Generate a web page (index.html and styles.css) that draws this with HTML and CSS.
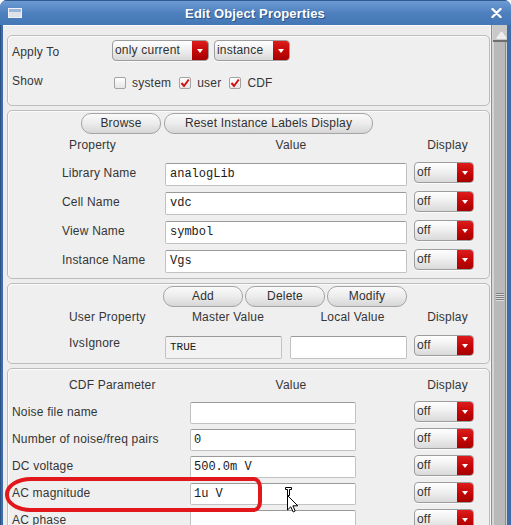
FILE: index.html
```html
<!DOCTYPE html>
<html>
<head>
<meta charset="utf-8">
<title>Edit Object Properties</title>
<link rel="stylesheet" href="styles.css">
</head>
<body>
<div class="window">
  <div class="titlebar">
    <span class="ticon"></span>
    <span class="title">Edit Object Properties</span>
    <svg class="close" width="11" height="10" viewBox="0 0 11 10"><path d="M1.5 1 L9.5 9 M9.5 1 L1.5 9" stroke="#fff" stroke-width="2.4" stroke-linecap="round"/></svg>
  </div>
  <div class="frame">
    <div class="content">
      <section class="group g1">
        <div class="r-apply">
          <span class="lbl lbl-apply">Apply To</span>
          <div class="combo c-only"><span class="ctext">only current</span><span class="carrow"></span></div>
          <div class="combo c-inst"><span class="ctext">instance</span><span class="carrow"></span></div>
        </div>
        <div class="r-show">
          <span class="lbl lbl-show">Show</span>
          <span class="cbitem"><span class="cb"></span><span>system</span></span>
          <span class="cbitem"><span class="cb"><svg width="10" height="10" viewBox="0 0 10 10"><path d="M1.5 5 L4 8 L8.8 1.5" fill="none" stroke="#d01010" stroke-width="2"/></svg></span><span>user</span></span>
          <span class="cbitem"><span class="cb"><svg width="10" height="10" viewBox="0 0 10 10"><path d="M1.5 5 L4 8 L8.8 1.5" fill="none" stroke="#d01010" stroke-width="2"/></svg></span><span>CDF</span></span>
        </div>
      </section>

      <section class="group g2">
        <div class="btnrow br2">
          <div class="btn b-browse">Browse</div>
          <div class="btn b-reset">Reset Instance Labels Display</div>
        </div>
        <div class="grid2">
          <span class="hdr h-prop">Property</span>
          <span class="hdr h-val">Value</span>
          <span class="hdr h-disp">Display</span>

          <span class="lbl l2">Library Name</span>
          <div class="field f2">analogLib</div>
          <div class="combo c-off"><span class="ctext">off</span><span class="carrow"></span></div>

          <span class="lbl l2">Cell Name</span>
          <div class="field f2">vdc</div>
          <div class="combo c-off"><span class="ctext">off</span><span class="carrow"></span></div>

          <span class="lbl l2">View Name</span>
          <div class="field f2">symbol</div>
          <div class="combo c-off"><span class="ctext">off</span><span class="carrow"></span></div>

          <span class="lbl l2">Instance Name</span>
          <div class="field f2">Vgs</div>
          <div class="combo c-off"><span class="ctext">off</span><span class="carrow"></span></div>
        </div>
      </section>

      <section class="group g3">
        <div class="btnrow br3">
          <div class="btn b-small">Add</div>
          <div class="btn b-small">Delete</div>
          <div class="btn b-small">Modify</div>
        </div>
        <div class="grid3">
          <span class="hdr h-prop">User Property</span>
          <span class="hdr h-master">Master Value</span>
          <span class="hdr h-local">Local Value</span>
          <span class="hdr h-disp">Display</span>

          <span class="lbl l3">IvsIgnore</span>
          <div class="field f3 ro">TRUE</div>
          <div class="field f3"></div>
          <div class="combo c-off"><span class="ctext">off</span><span class="carrow"></span></div>
        </div>
      </section>

      <section class="group g4">
        <div class="grid4h">
          <span class="hdr h-prop">CDF Parameter</span>
          <span class="hdr h-val">Value</span>
          <span class="hdr h-disp">Display</span>
        </div>
        <div class="grid4">
          <span class="lbl l4">Noise file name</span>
          <div class="field f4"></div>
          <div class="combo c-off"><span class="ctext">off</span><span class="carrow"></span></div>

          <span class="lbl l4">Number of noise/freq pairs</span>
          <div class="field f4">0</div>
          <div class="combo c-off"><span class="ctext">off</span><span class="carrow"></span></div>

          <span class="lbl l4">DC voltage</span>
          <div class="field f4">500.0m V</div>
          <div class="combo c-off"><span class="ctext">off</span><span class="carrow"></span></div>

          <span class="lbl l4">AC magnitude</span>
          <div class="field f4">1u V</div>
          <div class="combo c-off"><span class="ctext">off</span><span class="carrow"></span></div>

          <span class="lbl l4">AC phase</span>
          <div class="field f4"></div>
          <div class="combo c-off"><span class="ctext">off</span><span class="carrow"></span></div>
        </div>
      </section>
    </div>
    <div class="scrollbar">
      <div class="sb-up"><svg width="11" height="8" viewBox="0 0 11 8"><path d="M5.5 0.8 L10.2 7.2 L0.8 7.2 Z" fill="#ececec" stroke="#f8f8f8" stroke-width="1"/></svg></div>
      <div class="sb-thumb"><span class="grip"></span></div>
    </div>
  </div>
  <div class="annot"></div>
  <svg class="cursor" width="16" height="27" viewBox="0 0 16 27">
    <path d="M1.5 1.5 H7.5 V3.5 H5.5 V9.5 H3.5 V3.5 H1.5 Z" fill="#fff" stroke="#000" stroke-width="1"/>
    <path d="M3.5 9.5 L3.5 24 L6.8 20.8 L9.2 26 L11.2 25 L8.9 19.8 L13.8 19.8 Z" fill="#fff" stroke="#000" stroke-width="1" stroke-linejoin="round"/>
  </svg>
</div>
</body>
</html>
```

FILE: styles.css
```css
* { box-sizing: border-box; }
html, body { margin: 0; padding: 0; background: #ffffff; }
body {
  width: 511px; height: 525px; overflow: hidden;
  font-family: "Liberation Sans", Arial, sans-serif;
  font-size: 12px; letter-spacing: 0.2px; color: #353535;
}
.window {
  position: relative;
  width: 511px; height: 525px;
  display: flex; flex-direction: column;
  border-radius: 7px 7px 0 0; overflow: hidden;
  background: #3a67a2;
}
.titlebar {
  flex: none; height: 25px;
  display: grid; grid-template-columns: 1fr auto 1fr; align-items: center;
  padding: 0 9px 0 8px;
  background: linear-gradient(#6c9bd3, #4f80be 50%, #4477b6);
  border-top: 1px solid #2f5a92;
}
.ticon {
  justify-self: start;
  width: 14px; height: 10px;
  background: linear-gradient(#9db6d8 0 3px, #dde2ea 3px);
  border: 1px solid #eef2f7;
}
.title {
  font-weight: bold; font-size: 13px; letter-spacing: 0.15px;
  color: #ffffff; text-shadow: 1px 1px 0 #2d5589;
}
.close { justify-self: end; }
.frame {
  flex: 1; min-height: 0;
  display: flex;
  padding: 0 4px 0 3px;
  background: linear-gradient(to right, #2c5387 0 1px, #3d6ca9 1px);
}
.content {
  flex: 1; min-width: 0;
  background: #ededed;
  border-top: 1px solid #f9f9f9;
  padding: 9px 0 0 4px;
  display: flex; flex-direction: column; gap: 4px;
  overflow: hidden;
}
.group {
  flex: none;
  border: 1px solid #bcbcbc;
  border-radius: 5px;
  background: #efefef;
  box-shadow: inset 1px 1px 0 #fbfbfb;
}
.lbl { white-space: nowrap; }

/* group 1 */
.g1 { height: 71px; padding: 4px 0 0 4px; }
.r-apply { display: flex; align-items: center; height: 21px; }
.lbl-apply { width: 100px; padding-top: 3px; }
.r-show { display: flex; align-items: center; height: 20px; margin-top: 12px; }
.lbl-show { width: 102px; margin-top: -5px; }
.cbitem { display: flex; align-items: center; margin-right: 8px; }
.cb {
  width: 12px; height: 12px; margin-right: 6px;
  border: 1px solid #a3a3a3; border-radius: 2px;
  background: linear-gradient(#ffffff, #e6e6e6);
  display: flex; align-items: center; justify-content: center;
}
.cb svg { display: block; }

/* combos */
.combo {
  display: flex; height: 21px;
  border: 1px solid #9d9d9d; border-radius: 4px; overflow: hidden;
  background: linear-gradient(#ffffff, #f0f0f0 45%, #d9d9d9);
  box-shadow: 0 1px 0 #fafafa;
}
.ctext { flex: 1; padding-left: 2px; line-height: 19px; white-space: nowrap; overflow: hidden; color: #303030; }
.carrow {
  width: 16px; flex: none;
  background: linear-gradient(#de1d1d, #c30505 55%, #a60000);
  display: flex; align-items: center; justify-content: center;
}
.carrow::after {
  content: ""; width: 0; height: 0;
  border-left: 3.5px solid transparent; border-right: 3.5px solid transparent;
  border-top: 4px solid #ffffff;
}
.c-only { width: 97px; margin-right: 5px; }
.c-inst { width: 76px; }
.c-off { width: 60px; align-self: start; margin-top: -1px; }

/* buttons */
.btnrow { display: flex; height: 21px; }
.btn {
  height: 21px; line-height: 19px; text-align: center;
  border: 1px solid #a4a4a4; border-radius: 10px;
  background: linear-gradient(#fafafa, #ececec 50%, #d6d6d6);
  color: #303030; white-space: nowrap;
}
.br2 { margin: 1px 0 0 73px; gap: 3px; }
.b-browse { width: 80px; }
.b-reset { width: 209px; }
.br3 { margin: 1px 0 0 155px; gap: 2px; }
.b-small { width: 80px; }

/* fields */
.field {
  height: 23px; background: #ffffff;
  border: 1px solid #c2c2c2; border-top-color: #9a9a9a; border-radius: 2px;
  font-family: "Liberation Mono", "Courier New", monospace; font-size: 12px; letter-spacing: 0;
  color: #1a1a1a; line-height: 21px; padding-left: 4px; white-space: nowrap;
}
.field.ro { background: #f2f2f2; font-size: 11px; }

.hdr { white-space: nowrap; align-self: center; }
.h-prop { padding-left: 61px; }
.h-val { width: 242px; text-align: center; padding-left: 10px; }
.h-disp { text-align: center; padding-left: 7px; width: 60px; }

/* group 2 */
.g2 { height: 169px; padding-top: 1px; }
.grid2 {
  display: grid;
  grid-template-columns: 157px 249px 60px;
  grid-template-rows: 21px repeat(4, 23px);
  row-gap: 6px; align-items: center;
  margin-top: 2px;
}
.g2 .hdr, .g3 .hdr { margin-top: -3px; }
.l2 { padding-left: 54px; margin-top: -3px; }
.f2 { width: 242px; }

/* group 3 */
.g3 { height: 81px; padding-top: 1px; }
.grid3 {
  display: grid;
  grid-template-columns: 157px 125px 124px 60px;
  grid-template-rows: 21px 23px;
  row-gap: 7px; align-items: center;
  margin-top: 1px;
}
.h-master { width: 117px; text-align: center; padding-left: 9px; }
.h-local { width: 117px; text-align: center; padding-left: 8px; }
.l3 { padding-left: 61px; align-self: start; }
.f3 { width: 117px; }

/* group 4 */
.g4 { height: 200px; padding-top: 5px; }
.grid4h {
  display: grid;
  grid-template-columns: 157px 249px 60px;
  height: 21px; align-items: center;
}
.grid4 {
  display: grid;
  grid-template-columns: 182px 224px 60px;
  grid-auto-rows: 22px;
  row-gap: 5px; align-items: center;
  margin-top: 7px;
}
.l4 { padding-left: 4px; margin-top: -3px; }
.f4 { width: 166px; height: 22px; line-height: 20px; padding-left: 3px; }

/* scrollbar */
.scrollbar {
  width: 17px; flex: none;
  display: flex; flex-direction: column;
  background: linear-gradient(to right, #f6f6f6 0 1px, #8f8f8f 1px 2px, #d6d6d6 2px 4px, #b9b9b9 4px 15px, #8c8c8c 15px 16px, #cdcdcd 16px 17px);
}
.sb-up {
  height: 17px; flex: none;
  display: flex; align-items: center; justify-content: center;
  padding: 4px 0 0 3px;
  border-bottom: 2px solid #6f6f6f;
  margin-left: 3px;
  background: #c9c9c9;
}
.sb-thumb {
  flex: 1; display: flex; justify-content: center;
  padding: 251px 0 0 3px;
}
.grip {
  width: 8px; height: 8px;
  background: repeating-linear-gradient(#7f7f7f 0 1px, #dcdcdc 1px 2px);
}

/* annotation overlay */
.annot {
  position: absolute; left: 5px; top: 477px;
  width: 257px; height: 35px;
  border: 4px solid #e1171c;
  border-radius: 26px 8px 8px 26px / 17px 10px 10px 17px;
}
.cursor { position: absolute; left: 284px; top: 486px; }
```
